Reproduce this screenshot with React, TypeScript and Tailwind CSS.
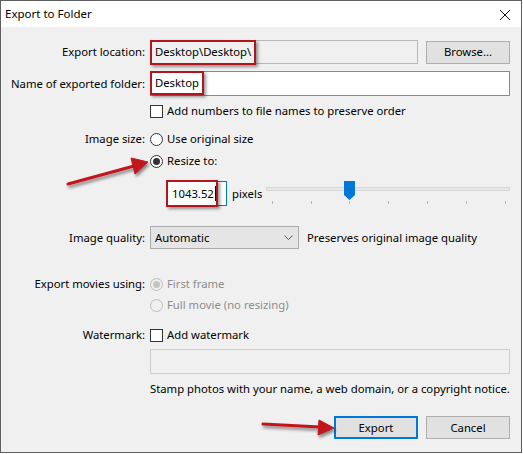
import React from "react";

const font = { fontFamily: '"Noto Sans", "Open Sans", sans-serif' };

function Radio({ checked, disabled }: { checked?: boolean; disabled?: boolean }) {
  return (
    <span
      className={`flex h-[13px] w-[13px] shrink-0 items-center justify-center rounded-full border ${
        disabled ? "border-[#bcbcbc] bg-[#f0f0f0]" : "border-[#333333] bg-white"
      }`}
    >
      {checked && (
        <span className={`h-[7px] w-[7px] rounded-full ${disabled ? "bg-[#c4c4c4]" : "bg-[#333333]"}`} />
      )}
    </span>
  );
}

function Checkbox() {
  return <span className="h-[13px] w-[13px] shrink-0 border border-[#333333] bg-white" />;
}

function Label({ children }: { children?: React.ReactNode }) {
  return <div className="w-[149px] shrink-0 whitespace-nowrap pr-[5px] text-right">{children}</div>;
}

function Row({ className, children }: { className: string; children: React.ReactNode }) {
  return <div className={`flex items-center ${className}`}>{children}</div>;
}

const callout = "border-2 border-[#b4141c] shadow-[2px_2px_3px_rgba(0,0,0,0.4)]";

export default function App() {
  const ticks = [273, 312, 350, 389, 428, 467, 506];
  return (
    <div className="relative h-[454px] w-[523px] bg-white" style={font}>
      <div className="flex h-[453px] w-[522px] flex-col border border-[#5f5f5f] text-[11.3px] leading-none text-black">
        {/* title bar */}
        <div className="flex h-[26px] shrink-0 items-center justify-between bg-white pl-[4px] pr-[10px]">
          <span className="text-[11.5px]">Export to Folder</span>
          <svg width="12" height="12" viewBox="0 0 12 12" className="mt-[1px]">
            <path d="M1 1 L11 11 M11 1 L1 11" stroke="#111" strokeWidth="1" />
          </svg>
        </div>

        {/* body */}
        <div className="flex flex-1 flex-col bg-[#f0f0f0] pr-[11px]">
          <Row className="mt-[13px] h-[24px]">
            <Label>Export location:</Label>
            <div className="flex h-[24px] w-[268px] items-center border border-[#b9b9b9] bg-[#f0f0f0]">
              <span className={`-ml-px flex h-[25px] items-center px-[3px] ${callout}`}>Desktop\Desktop\</span>
            </div>
            <div className="ml-[8px] flex h-[23px] w-[84px] items-center justify-center border border-[#adadad] bg-[#e1e1e1]">
              Browse...
            </div>
          </Row>

          <Row className="mt-[7px] h-[25px]">
            <Label>Name of exported folder:</Label>
            <div className="flex h-[25px] flex-1 items-center border border-[#8a8a8a] bg-white">
              <span className={`-ml-px -mt-px flex h-[24px] items-center px-[3px] ${callout}`}>Desktop</span>
            </div>
          </Row>

          <Row className="mt-[6px] h-[18px]">
            <Label />
            <Checkbox />
            <span className="ml-[4px]">Add numbers to file names to preserve order</span>
          </Row>

          <Row className="mt-[10px] h-[18px]">
            <Label>Image size:</Label>
            <Radio />
            <span className="ml-[4px]">Use original size</span>
          </Row>

          <Row className="mt-[4px] h-[18px]">
            <Label />
            <Radio checked />
            <span className="ml-[4px]">Resize to:</span>
          </Row>

          <Row className="mt-[11px] h-[25px]">
            <div className="w-[165px] shrink-0" />
            <div className="relative flex h-[25px] w-[61px] items-center border border-[#0078d7] bg-white">
              <span className={`absolute -left-px -top-[2px] flex h-[27px] w-[52px] items-center pl-[4px] ${callout}`}>
                1043.52<span className="ml-[1px] inline-block h-[15px] w-px bg-black" />
              </span>
            </div>
            <span className="ml-[5px]">pixels</span>
            {/* slider */}
            <div className="relative ml-auto h-[25px] w-[244px]">
              <div className="absolute left-0 right-0 top-[6px] h-[4px] border border-[#d6d6d6] bg-[#e7e7e7]" />
              <svg className="absolute left-[78px] top-0" width="11" height="19" viewBox="0 0 11 19">
                <path d="M0 0 H11 V14 L5.5 19 L0 14 Z" fill="#0078d7" />
              </svg>
              {ticks.map((t) => (
                <span
                  key={t}
                  className="absolute top-[20px] h-[3px] w-px bg-[#b5b5b5]"
                  style={{ left: t - 267 }}
                />
              ))}
            </div>
          </Row>

          <Row className="mt-[20px] h-[23px]">
            <Label>Image quality:</Label>
            <div className="flex h-[23px] w-[149px] items-center justify-between border border-[#acacac] bg-[#e5e5e5] pl-[4px] pr-[5px]">
              <span>Automatic</span>
              <svg width="9" height="6" viewBox="0 0 9 6">
                <path d="M0.5 0.5 L4.5 4.5 L8.5 0.5" stroke="#555" strokeWidth="1" fill="none" />
              </svg>
            </div>
            <span className="ml-[8px]">Preserves original image quality</span>
          </Row>

          <Row className="mt-[26px] h-[18px]">
            <Label>Export movies using:</Label>
            <Radio checked disabled />
            <span className="ml-[4px] text-[#8d8d8d]">First frame</span>
          </Row>

          <Row className="mt-[3px] h-[18px]">
            <Label />
            <Radio disabled />
            <span className="ml-[4px] text-[#8d8d8d]">Full movie (no resizing)</span>
          </Row>

          <Row className="mt-[12px] h-[18px]">
            <Label>Watermark:</Label>
            <Checkbox />
            <span className="ml-[4px]">Add watermark</span>
          </Row>

          <Row className="mt-[5px] h-[25px]">
            <Label />
            <div className="h-[25px] flex-1 border border-[#cccccc] bg-[#f0f0f0]" />
          </Row>

          <Row className="mt-[6px] h-[18px]">
            <Label />
            <span className="whitespace-nowrap">Stamp photos with your name, a web domain, or a copyright notice.</span>
          </Row>

          <div className="mt-[18px] flex h-[23px] justify-end gap-[8px]">
            <div className="flex h-[23px] w-[84px] items-center justify-center border-2 border-[#0078d7] bg-[#e1e1e1]">
              Export
            </div>
            <div className="flex h-[23px] w-[84px] items-center justify-center border border-[#adadad] bg-[#e1e1e1]">
              Cancel
            </div>
          </div>
        </div>
      </div>

      {/* annotation arrows */}
      <svg className="pointer-events-none absolute left-0 top-0" width="523" height="454" viewBox="0 0 523 454">
        <defs>
          <filter id="arrowShadow" x="-20%" y="-50%" width="140%" height="200%">
            <feDropShadow dx="1.5" dy="2.5" stdDeviation="1.5" floodColor="#000" floodOpacity="0.45" />
          </filter>
        </defs>
        <g filter="url(#arrowShadow)" fill="#c3161c" stroke="#c3161c">
          <line x1="68" y1="184" x2="134" y2="166" strokeWidth="3" strokeLinecap="round" />
          <path d="M148 162 L131 158 L135 174 Z" strokeWidth="1" strokeLinejoin="round" />
          <line x1="263" y1="424" x2="320" y2="427" strokeWidth="3" strokeLinecap="round" />
          <path d="M334 428 L319 420 L318 435 Z" strokeWidth="1" strokeLinejoin="round" />
        </g>
      </svg>
    </div>
  );
}
